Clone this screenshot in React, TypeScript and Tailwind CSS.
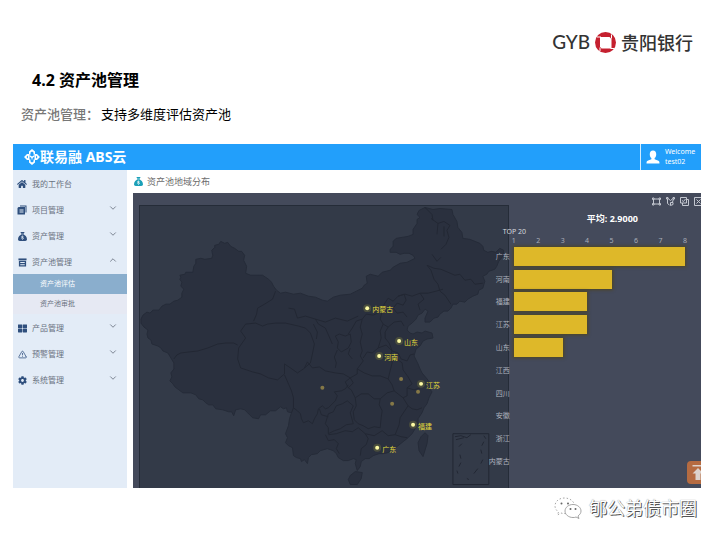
import type { ReactNode } from "react";
import { ChevronDown, ChevronUp, TriangleAlert } from "lucide-react";
import { FaHome, FaCog, FaThLarge } from "react-icons/fa";
import { FaSackDollar } from "react-icons/fa6";

type MenuItem = {
  label: string;
  icon: ReactNode;
  open?: boolean;
  leaf?: boolean;
  children?: { label: string; active?: boolean }[];
};

const MENU: MenuItem[] = [
  { label: "我的工作台", icon: <FaHome className="size-[10px]" />, leaf: true },
  { label: "项目管理", icon: <IconProject /> },
  { label: "资产管理", icon: <FaSackDollar className="size-[9px]" /> },
  {
    label: "资产池管理",
    icon: <IconPool />,
    open: true,
    children: [{ label: "资产池评估", active: true }, { label: "资产池审批" }],
  },
  { label: "产品管理", icon: <FaThLarge className="size-[9px]" /> },
  { label: "预警管理", icon: <TriangleAlert className="size-[9px]" /> },
  { label: "系统管理", icon: <FaCog className="size-[9px]" /> },
];

const BARS = [
  { name: "广东", value: 8 },
  { name: "河南", value: 5 },
  { name: "福建", value: 4 },
  { name: "江苏", value: 4 },
  { name: "山东", value: 3 },
  { name: "江西", value: 1 },
  { name: "四川", value: 1 },
  { name: "安徽", value: 1 },
  { name: "浙江", value: 1 },
  { name: "内蒙古", value: 1 },
];

const TICKS = [1, 2, 3, 4, 5, 6, 7, 8];

const CITIES = [
  { name: "内蒙古", x: 367, y: 307 },
  { name: "山东", x: 399, y: 340 },
  { name: "河南", x: 379, y: 355 },
  { name: "江苏", x: 421, y: 383 },
  { name: "福建", x: 413, y: 424 },
  { name: "广东", x: 377, y: 447 },
];

const MINOR = [
  { x: 322, y: 387 },
  { x: 401, y: 378 },
  { x: 418, y: 391 },
  { x: 392, y: 403 },
];

const OUTLINE =
  "M140 318L142 314 146 311 149 312 152 309 158 309 161 305 165 303 169 303 173 300 177 299 181 296 181 292 183 288 180 285 181 281 179 278 180 276 179 274 184 273 185 271 192 271 193 265 195 262 195 258 200 257 204 258 211 257 212 254 211 249 214 246 214 244 218 243 220 240 224 242 227 241 230 245 234 247 238 250 241 250 244 254 243 259 246 265 245 272 250 274 258 274 262 274 268 278 271 281 273 285 276 289 280 292 285 291 293 293 300 292 308 295 315 296 322 299 327 300 333 296 340 294 350 293 356 290 362 287 364 284 367 282 366 275 370 273 378 275 382 271 390 269 393 266 400 262 407 261 415 257 413 254 409 252 404 252 400 253 396 251 390 251 390 248 393 245 393 240 396 237 402 236 408 235 413 233 413 228 417 222 417 218 420 216 417 213 419 209 425 206 433 208 440 207 452 208 453 213 457 220 458 226 462 231 463 237 470 238 475 240 480 242 483 245 484 249 488 251 492 250 496 251 500 247 504 249 503 255 499 260 497 265 495 268 489 270 487 273 483 275 485 280 483 287 479 289 478 293 473 295 468 298 465 301 460 300 457 303 453 303 451 307 448 310 444 310 440 313 438 316 434 317 430 321 425 321 425 317 428 310 425 308 422 312 418 314 416 318 412 322 408 325 407 329 410 332 413 333 417 331 422 332 425 330 432 332 433 337 427 338 423 340 420 345 416 348 414 355 418 363 420 368 422 372 427 378 431 383 429 387 432 391 429 397 427 403 424 407 422 412 418 418 418 424 415 428 412 433 408 437 403 441 398 445 393 449 388 452 383 453 379 453 373 455 369 458 365 458 361 461 360 466 357 470 355 463 356 459 353 458 348 460 343 460 338 457 336 453 333 450 327 448 320 450 317 453 311 454 308 457 307 463 304 459 301 461 300 458 296 457 293 455 292 447 288 445 285 442 287 437 285 433 288 425 289 418 291 412 287 411 286 407 283 408 280 406 275 410 270 410 265 414 260 414 258 418 252 417 247 412 244 409 240 408 235 409 233 415 231 411 228 411 222 409 215 408 212 404 208 404 205 402 202 399 198 398 195 394 190 392 182 392 178 389 174 386 172 383 169 380 171 376 170 372 173 368 173 362 170 357 167 352 162 350 160 347 157 345 151 343 150 339 147 337 146 333 147 329 143 326 140 322Z";

const BORDERS = [
  // west: Xinjiang, Tibet, Qinghai
  "M275 290L272 298 264 303 257 307 256 313 253 320",
  "M173 358L176 354 180 352 188 351 197 350 207 347 217 343 225 342 233 342 237 344",
  "M240 330L245 323 255 322 262 325 267 323 275 322 285 322 298 325 305 327 310 332 314 343 312 353 310 362 303 368 297 372 290 367 284 363 284 373 277 379 268 377 260 373 252 371 240 367 237 358 238 347 245 337Z",
  // Gansu, Ningxia, Shaanxi
  "M288 307L294 308 297 317 305 315 315 318 318 323 325 327 329 336 332 343M315 318L325 321 335 317 347 320 358 315M313 323L317 331 316 338",
  "M335 335L339 333 345 335 350 333 351 341 348 347 341 351 337 347 338 341ZM362 318L356 320 352 327 348 333M337 349L334 356 336 362 335 367M350 347L348 353 352 358",
  // Sichuan, Yunnan, Guizhou
  "M284 374L288 383 291 390 293 397 293 407 297 410 300 413 301 418 303 422 308 420 312 423 314 418 317 413 318 408 322 405 325 408 328 407 335 400 337 395 334 391 341 390 345 388 348 384",
  "M304 367L307 361 312 367 319 366 325 370 335 372 343 373 350 377 345 381 348 387",
  "M328 413L333 411 336 405 342 403 347 400 353 405 350 412 353 423 346 424 340 428 334 430 328 433 328 427 325 423Z",
  "M293 407L291 412M319 408L321 414 328 416M325 434L328 440 334 439 338 443 336 448 339 453",
  // Hubei, Hunan, Jiangxi
  "M355 397L361 393 368 393 374 398 380 398 379 404 382 410 381 417 380 427 374 426 368 428 363 425 358 423 354 419 353 411 356 405Z",
  "M355 397L351 389 348 387 353 382 350 377 357 373 357 368 364 372 372 375 380 375 388 378 392 384 394 390 387 392 380 398",
  "M394 390L403 397 408 405 404 411 400 417 399 424 395 434",
  // Guangxi, Guangdong, Fujian
  "M328 434L336 433 345 430 352 431 358 427 365 433 368 438 366 444 361 448 360 455M365 433L374 435 382 430 388 435 395 434 401 436 407 437",
  "M408 405L412 408 417 409 422 407",
  // Shanxi, Henan, Anhui, Jiangsu
  "M362 318L360 326 362 333 360 341 362 350 360 355 363 360 357 368M382 310L380 318 383 323 380 330 381 337 378 347 372 352 367 351 363 357",
  "M378 347L386 344 392 350 390 355 392 362 390 370 388 378M392 360L397 358 402 362 403 369 408 376 412 383 407 387 407 395 403 397M407 387L414 389 420 387",
  "M383 323L388 326 385 331 385 337 389 342 392 350 398 352 401 358 407 360 410 354 414 353",
  // Hebei, Beijing, Tianjin
  "M362 318L366 313 373 314 382 310 384 303 388 297 393 300 398 295 404 293 406 299 403 304 397 302 393 307 397 312 403 311 407 316",
  "M388 326L394 321 401 320 404 325",
  // north-east
  "M398 295L405 293 412 295 420 292 428 292 436 290 443 288M420 292L424 298 418 303 420 309",
  "M427 264L434 267 441 268 448 271 455 274 460 273 465 279 471 278 475 283 483 282M427 264L431 269 434 278 438 283 440 290 445 294 451 303",
  "M431 217L438 222 444 220 450 224 447 229 449 236 446 243 441 248M438 222L437 233M444 225L444 235M432 253L437 260 441 256M425 206L432 213 433 219",
];

function IconProject() {
  return (
    <svg viewBox="0 0 20 20" className="size-[10px]" fill="currentColor">
      <path d="M6 1h13v14H17V3H6z" />
      <path fillRule="evenodd" d="M3 4h13v15H1V6zM5 9v2h8V9zM5 13v2h8v-2z" />
    </svg>
  );
}

function IconPool() {
  return (
    <svg viewBox="0 0 20 20" className="size-[9px]" fill="currentColor">
      <path d="M1 1h18v4H1z" />
      <path fillRule="evenodd" d="M2 6h16v13H2zM5 9v2h10V9zM5 14v2h10v-2z" />
    </svg>
  );
}

function CloudLogo() {
  return (
    <svg viewBox="0 0 32 32" className="size-4" fill="#fff">
      <path d="M16 0l6 5v6h-3V7l-3-2-3 2v4h-3V5z" />
      <path d="M16 32l6-5v-6h-3v4l-3 2-3-2v-4h-3v6z" />
      <path d="M0 16l6-6h5v12H6zM32 16l-6-6h-5v12h5z" />
      <path d="M11 12l5 3 5-3v3l-4 3v3h-2v-3l-4-3z" />
      <path d="M5 16l3-3v6zM27 16l-3-3v6z" fill="#229ffb" />
    </svg>
  );
}

function BankLogo() {
  return (
    <svg viewBox="0 0 42 42" className="size-[21px]">
      <circle cx="21" cy="21" r="21" fill="#c5202f" />
      <path d="M10 10h19l4 4v19H13l-3-4z" fill="#fff" />
      <path d="M4 10h8M31 33h7M10 31v7M33 5v8" stroke="#fff" strokeWidth="2" />
    </svg>
  );
}

function ChinaMap() {
  return (
    <svg viewBox="139 205 369 282" className="block h-[282px] w-full" role="img" aria-label="资产池地域分布">
      <g fill="#2a303e" stroke="#252b38" strokeWidth="1" strokeLinejoin="round">
        <path d={OUTLINE} />
        <path d="M350 475L355 471 362 472 361 478 357 484 350 484 348 479Z" />
        <path d="M418 442L421 436 425 432 428 435 427 443 423 456 419 450Z" />
      </g>
      <g fill="none" stroke="#222733" strokeWidth="1" strokeLinejoin="round">
        {BORDERS.map((d) => (
          <path key={d} d={d} />
        ))}
        <rect x="453" y="433" width="36" height="51" />
        <path d="M455 436l6-1 6 2 4-3M456 439l8-2M462 443l-3 3M460 454l1 4M461 462l-2 4M457 470l1 3M467 478l2 1M474 473l4-5M481 463l2-4M482 453l-1-4M482 445l2-4M484 435l2 3" />
      </g>
      {MINOR.map((p) => (
        <circle key={`${p.x}-${p.y}`} cx={p.x} cy={p.y} r="2" fill="#857847" />
      ))}
      {CITIES.map((c) => (
        <g key={c.name}>
          <circle cx={c.x} cy={c.y} r="4" fill="#a8a53a" opacity="0.25" />
          <circle cx={c.x} cy={c.y} r="2" fill="#fdfba4" />
          <text x={c.x + 5} y={c.y + 4} fontSize="7" fill="#e3dc3c">
            {c.name}
          </text>
        </g>
      ))}
    </svg>
  );
}

function Toolbox() {
  const cls = "size-[9px] shrink-0";
  return (
    <div className="flex h-3 justify-end gap-[5px] overflow-hidden text-[#c3c7d0]">
      <button aria-label="矩形选择">
        <svg viewBox="0 0 18 18" className={cls} fill="none" stroke="currentColor" strokeWidth="2">
          <path d="M1 2h3v3H1zM14 2h3v3h-3zM1 13h3v3H1zM14 13h3v3h-3zM4 4h10M4 14h10M3 5v8M15 5v8" />
        </svg>
      </button>
      <button aria-label="圈选">
        <svg viewBox="0 0 18 18" className={cls} fill="none" stroke="currentColor" strokeWidth="2">
          <path d="M1 1h3v3H1zM14 1h3v3h-3zM4 3l5 4 5-4M3 4v9l4 3M15 4l-2 6M9 11h5v4l-5 2z" />
        </svg>
      </button>
      <button aria-label="保持选择">
        <svg viewBox="0 0 18 18" className={cls} fill="none" stroke="currentColor" strokeWidth="2">
          <path d="M1 1h12v11H1zM5 12v5h12V5h-4M4 7l3 2 4-5" />
        </svg>
      </button>
      <button aria-label="清除选择" className="-mr-[2px]">
        <svg viewBox="0 0 18 18" className={cls} fill="none" stroke="currentColor" strokeWidth="2">
          <path d="M1 1h16v16H1zM5 5l8 8M13 5l-8 8" />
        </svg>
      </button>
    </div>
  );
}

function RankChart() {
  const max = 8;
  return (
    <div className="relative z-10 -ml-5 flex min-w-0 flex-[213_1_0%] flex-col pt-[2px]">
      <Toolbox />
      <h3 className="mt-1 pl-[35px] text-center text-[9px] leading-4 font-bold text-white">平均: 2.9000</h3>
      <div className="pl-[14px] text-[7px] leading-[10px] text-[#d5d8de]">TOP 20</div>
      <div className="flex justify-between pr-4 pl-[25px] text-[7px] leading-[8px] text-[#a9aeb9]">
        {TICKS.map((t) => (
          <span key={t} className="flex w-0 justify-center">
            {t}
          </span>
        ))}
      </div>
      <div className="grid h-[228px] grid-rows-10 pr-4">
        {BARS.map((b) => (
          <div key={b.name} className="flex items-center gap-1">
            <span className="flex w-[21px] shrink-0 justify-end text-[7px] leading-none whitespace-nowrap text-[#aeb3be]">
              {b.name}
            </span>
            <div className="flex-1">
              {b.value > 1 && (
                <div
                  className="h-[19px] bg-[#deb829] shadow-[0_0_3px_1px_#4d4524]"
                  style={{ width: `${((b.value - 1) / (max - 1)) * 100}%` }}
                />
              )}
            </div>
          </div>
        ))}
      </div>
    </div>
  );
}

function Sidebar() {
  return (
    <nav className="w-[114px] shrink-0 bg-[#e3ecf7] text-[8px] text-[#69717f]">
      {MENU.map((m) => (
        <div key={m.label}>
          <a href="#" className="flex h-[26px] items-center pt-[2px] pr-[9px] pl-[4px]">
            <span className="flex w-[10px] justify-center text-[#2f4f7d]">{m.icon}</span>
            <span className="ml-[5px] flex-1">{m.label}</span>
            {!m.leaf &&
              (m.open ? (
                <ChevronUp className="mb-1 size-[10px]" strokeWidth={2} />
              ) : (
                <ChevronDown className="mb-1 size-[10px]" strokeWidth={2} />
              ))}
          </a>
          {m.children?.map((c) => (
            <a
              key={c.label}
              href="#"
              className={
                c.active
                  ? "flex h-5 items-center bg-[#8aaecd] pl-[27px] text-[7px] text-white"
                  : "flex h-5 items-center bg-[#e6e9f3] pl-[27px] text-[7px]"
              }
            >
              {c.label}
            </a>
          ))}
        </div>
      ))}
    </nav>
  );
}

export default function App() {
  return (
    <div className="min-h-screen bg-white font-['Noto_Sans','Noto_Sans_CJK_SC',sans-serif] text-black">
      {/* Bank brand */}
      <header className="flex items-center justify-end gap-[5px] pt-[31px] pr-[27px] text-[#333]">
        <span className="font-['Lato',sans-serif] text-[19px] leading-[22px] font-medium">GYB</span>
        <BankLogo />
        <span className="font-['Noto_Sans_CJK_SC',sans-serif] text-[18px] leading-[22px] font-medium">贵阳银行</span>
      </header>

      <h1 className="mt-[15px] pl-8 text-[16px] leading-6 font-bold">4.2 资产池管理</h1>
      <p className="mt-3 pl-[21px] text-[13px] leading-5">
        <span className="mr-[2px] font-medium text-[#777]">资产池管理：</span>支持多维度评估资产池
      </p>

      {/* Application window */}
      <section className="mt-5 mr-[19px] ml-[13px]">
        <div className="flex h-[26px] items-stretch bg-[#229ffb] text-white">
          <div className="flex flex-1 items-center pl-[11px]">
            <CloudLogo />
            <span className="text-[14px] leading-none font-bold">联易融 ABS云</span>
          </div>
          <div className="flex w-[61px] items-center gap-[5px] border-l border-white/80 pl-[5px]">
            <svg viewBox="0 0 26 26" className="size-[14px]" fill="#fff">
              <path d="M13 1c4 0 6 3 6 7 0 3-1 6-3 7v2l7 3c2 1 2 2 2 5H1c0-3 0-4 2-5l7-3v-2c-2-1-3-4-3-7 0-4 2-7 6-7z" />
            </svg>
            <span className="text-[7px] leading-[10px]">
              Welcome
              <br />
              test02
            </span>
          </div>
        </div>

        <div className="flex">
          <Sidebar />
          <main className="ml-[6px] min-w-0 flex-1">
            <h2 className="flex h-[23px] items-center gap-1 pl-[1px] text-[9px] text-[#6c6c6c]">
              <FaSackDollar className="size-[9px] text-[#1ba0b8]" />
              资产池地域分布
            </h2>
            <div className="relative flex overflow-hidden bg-[#444a5b] pl-[6px]">
              <div className="mt-3 min-w-0 flex-[369_1_0%] border border-b-0 border-[#252c38] bg-[#333a48]">
                <ChinaMap />
              </div>
              <RankChart />
              <button
                aria-label="返回顶部"
                className="absolute right-0 bottom-1 z-20 flex h-[23px] w-[14px] items-center overflow-hidden rounded-l bg-[#b56b41] pl-[5px]"
              >
                <svg viewBox="0 0 24 34" className="h-[17px] w-3 shrink-0" fill="#ddd2cb">
                  <path d="M1 2h22v3H1zM12 8l11 11h-6v13H7V19H1z" />
                </svg>
              </button>
            </div>
          </main>
        </div>
      </section>

      {/* Account watermark */}
      <footer className="mt-[7px] flex items-center justify-end gap-[7px] pr-[23px]">
        <svg viewBox="0 0 56 44" className="h-[22px] w-7" fill="#fff" stroke="#888" strokeWidth="1.5">
          <path d="M21 2C10 2 2 9 2 18c0 5 3 9 7 12l-2 6 7-4c3 1 5 1 8 1 10 0 19-6 19-15S32 2 21 2z" strokeDasharray="3 4" />
          <path d="M38 15c-9 0-16 6-16 13s7 13 16 13c2 0 4 0 6-1l6 3-2-5c4-3 6-6 6-10 0-7-7-13-16-13z" />
          <g fill="#666" stroke="none">
            <circle cx="15" cy="13" r="2" />
            <circle cx="28" cy="13" r="2" />
            <circle cx="33" cy="24" r="2" />
            <circle cx="43" cy="24" r="2" />
          </g>
        </svg>
        <span className="text-[18px] leading-[26px] text-white [text-shadow:1px_1px_0_#555,0_0_1px_#777]">郇公弟债市圈</span>
      </footer>
    </div>
  );
}
